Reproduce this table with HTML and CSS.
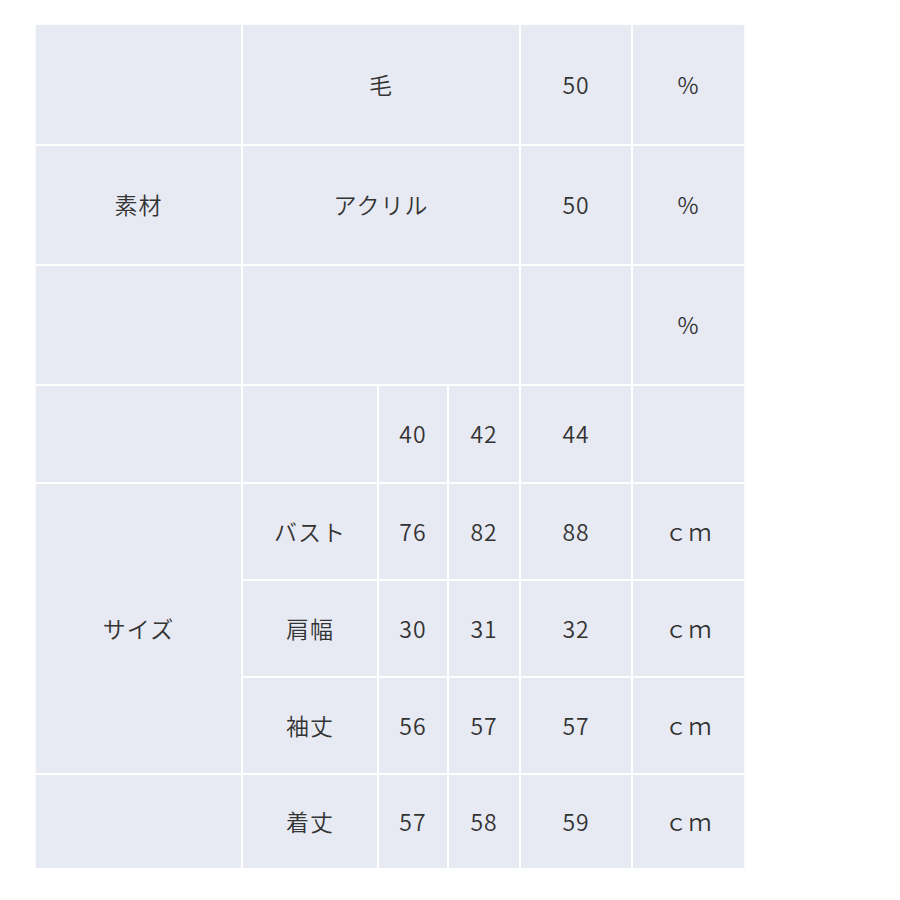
FILE: index.html
```html
<!DOCTYPE html>
<html lang="ja">
<head>
<meta charset="utf-8">
<link rel="stylesheet" href="styles.css">
</head>
<body>
<div class="wrap">
<table class="spec">
<colgroup>
<col class="c1"><col class="c2"><col class="c3"><col class="c4"><col class="c5"><col class="c6">
</colgroup>
<tr class="first"><td></td><td colspan="3">毛</td><td>50</td><td>%</td></tr>
<tr class="tall"><td>素材</td><td colspan="3">アクリル</td><td>50</td><td>%</td></tr>
<tr class="tall"><td></td><td colspan="3"></td><td></td><td>%</td></tr>
<tr class="head"><td></td><td></td><td>40</td><td>42</td><td>44</td><td></td></tr>
<tr class="short"><td rowspan="3">サイズ</td><td>バスト</td><td>76</td><td>82</td><td>88</td><td>ｃｍ</td></tr>
<tr class="short"><td>肩幅</td><td>30</td><td>31</td><td>32</td><td>ｃｍ</td></tr>
<tr class="short"><td>袖丈</td><td>56</td><td>57</td><td>57</td><td>ｃｍ</td></tr>
<tr class="last"><td></td><td>着丈</td><td>57</td><td>58</td><td>59</td><td>ｃｍ</td></tr>
</table>
</div>
</body>
</html>
```

FILE: styles.css
```css
html, body {
  margin: 0;
  padding: 0;
  background: #ffffff;
}
.wrap {
  padding: 25px 0 0 36px;
}
.spec {
  border-collapse: collapse;
  table-layout: fixed;
  width: 708px;
  background: #e8eaf3;
  font-family: "Noto Sans CJK JP", "Noto Sans", sans-serif;
  font-size: 23px;
  font-weight: 350;
  color: #333333;
  box-shadow: 0 1px 3px rgba(0,0,0,0.06);
}
.c1 { width: 206px; }
.c2 { width: 136px; }
.c3 { width: 70px; }
.c4 { width: 72px; }
.c5 { width: 112px; }
.c6 { width: 112px; }
.spec td {
  border: 2px solid #ffffff;
  text-align: center;
  vertical-align: middle;
  padding: 0;
  letter-spacing: 1px;
  line-height: 1.2;
}
.spec tr:first-child td { border-top: none; }
.spec tr:last-child td { border-bottom: none; }
.spec td:first-child { border-left: none; }
.spec tr td:last-child { border-right: none; }
.first td { height: 119px; }
.tall td { height: 118px; }
.head td { height: 96px; }
.short td { height: 95px; }
.last td { height: 93px; }
```
